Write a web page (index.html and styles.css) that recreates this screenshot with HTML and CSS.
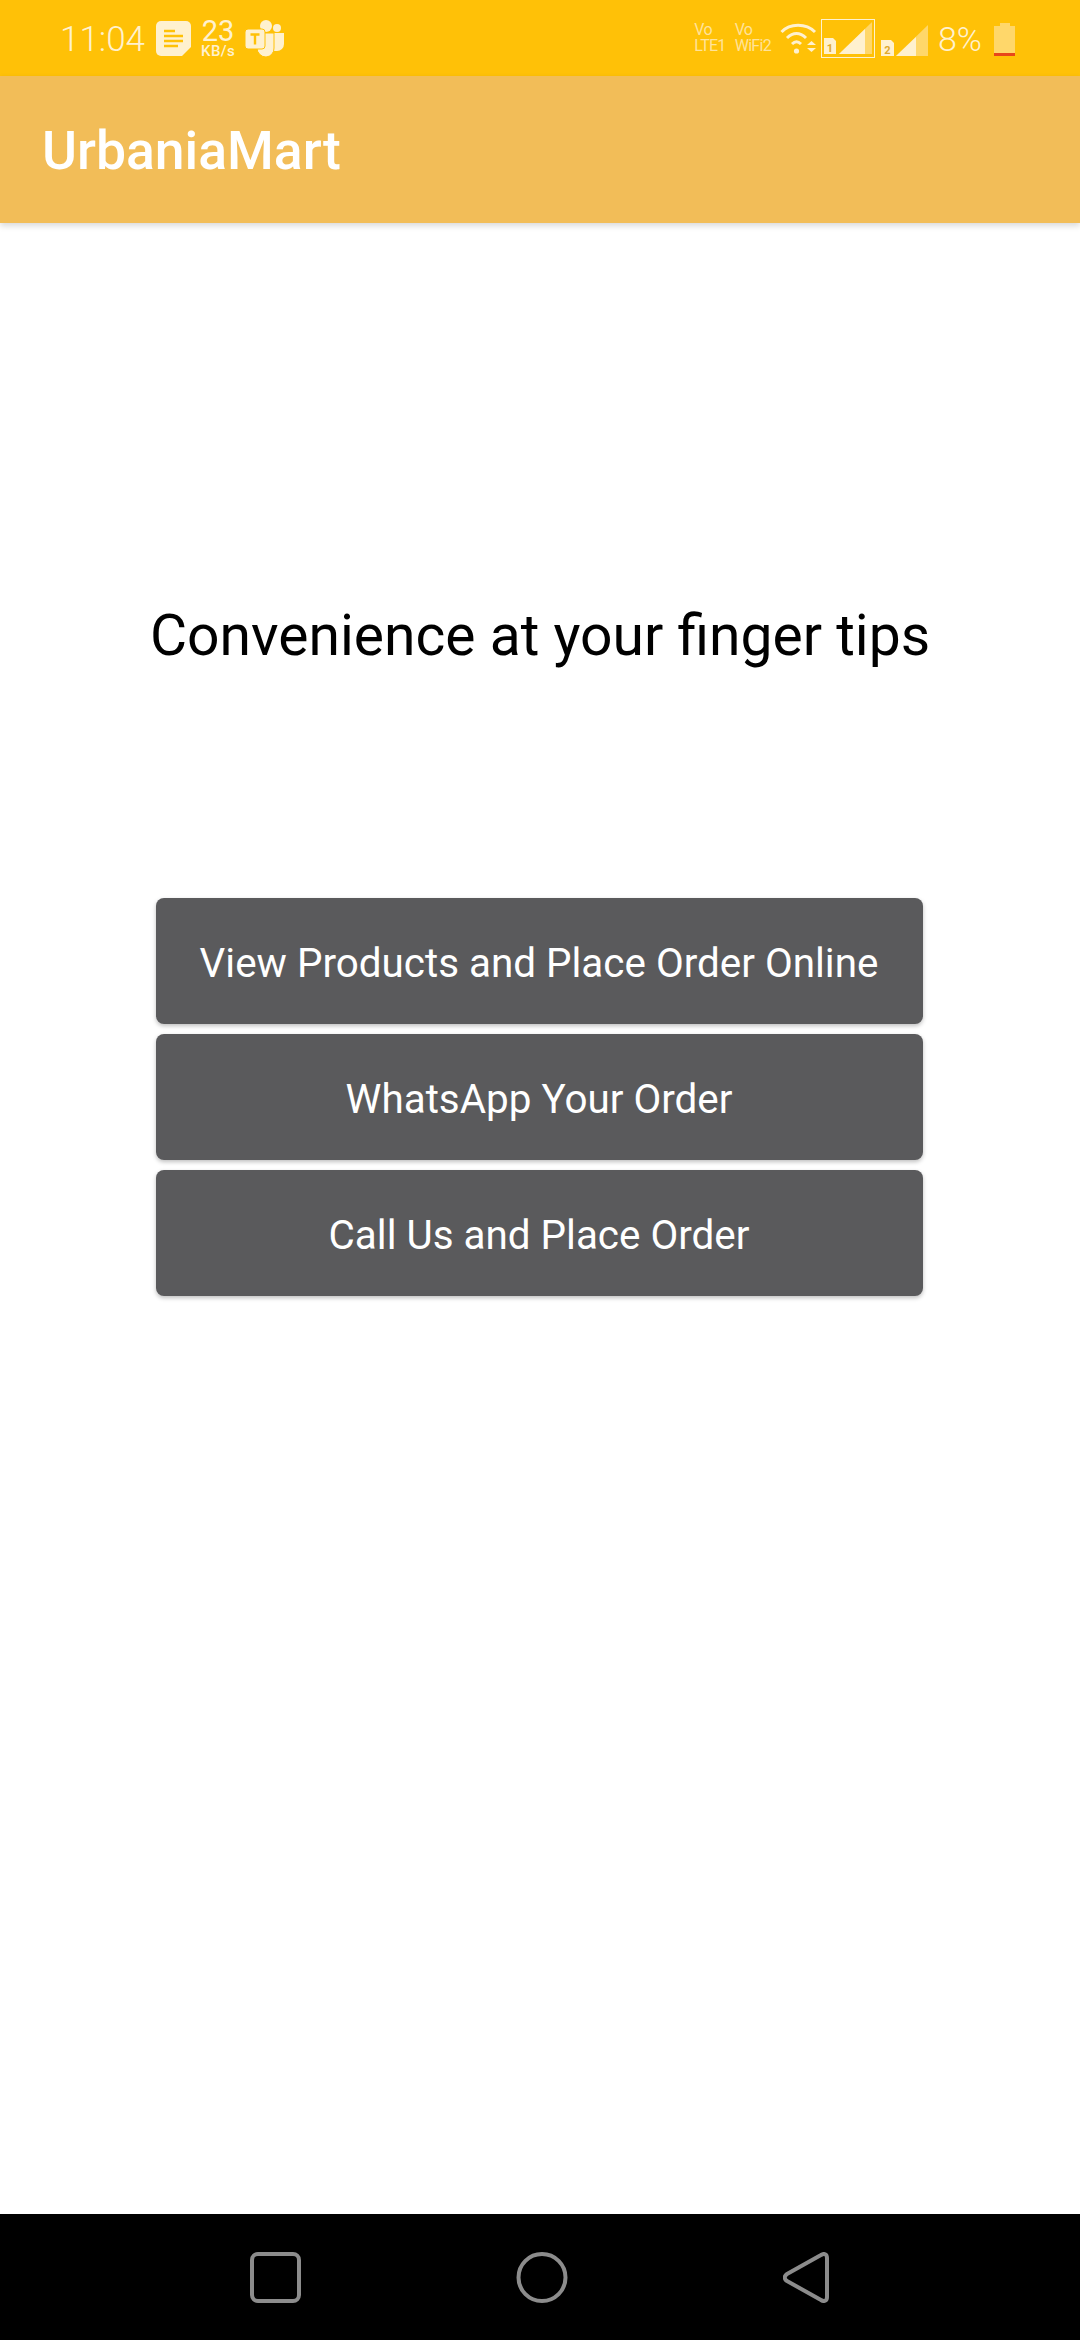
FILE: index.html
```html
<!DOCTYPE html>
<html lang="en">
<head>
  <meta charset="UTF-8">
  <meta name="viewport" content="width=device-width, initial-scale=1.0">
  <title>UrbaniaMart</title>
  <link rel="stylesheet" href="styles.css">
</head>
<body>

<div class="status-bar">
  <div class="status-left">
    <span class="clock">11:04</span>
    <svg class="icon-note" width="35" height="35" viewBox="0 0 35 35">
      <path d="M5 0H30A5 5 0 0 1 35 5V26L26 35H5A5 5 0 0 1 0 30V5A5 5 0 0 1 5 0Z" fill="#fff1cf"/>
      <path d="M8 10H19M8 15H27M8 20H27M8 25H22" stroke="#ffc107" stroke-width="2.400"/>
    </svg>
    <div class="speed">
      <span class="speed-num">23</span>
      <span class="speed-unit">KB/s</span>
    </div>
    <svg class="icon-teams" width="39" height="37" viewBox="0 0 39 37">
      <circle cx="21" cy="6" r="6" fill="#fff1cf"/>
      <circle cx="32" cy="8" r="4" fill="#fff1cf"/>
      <path d="M26 13H39V24A7 7 0 0 1 32 31H28Z" fill="#fff1cf"/>
      <path d="M13 13H29V28A8.500 8.500 0 0 1 21 37A9 9 0 0 1 12 28Z" fill="#fff1cf" stroke="#ffc107" stroke-width="1"/>
      <rect x="0" y="9" width="20" height="20" rx="3" fill="#fff1cf" stroke="#ffc107" stroke-width="1"/>
      <path d="M5.500 14.500H14.500M10 14.500V24.500" stroke="#ffc107" stroke-width="2.400"/>
    </svg>
  </div>
  <div class="status-right">
    <div class="net-tag"><span>Vo</span><span>LTE1</span></div>
    <div class="net-tag"><span>Vo</span><span>WiFi2</span></div>
    <svg class="icon-wifi" width="37" height="31" viewBox="0 0 37 31">
      <path d="M1.500 9C10 0 26 0 35 9M7 15C13 9 20 9 26 15M12 21C15 18 18 18 21 21" fill="none" stroke="#fff1cf" stroke-width="3"/>
      <circle cx="16.500" cy="28" r="2.600" fill="#fff1cf"/>
      <path d="M27 22L31.500 18L36 22ZM27 25H36L31.500 29Z" fill="#fff1cf"/>
    </svg>
    <div class="sim sim-active">
      <svg width="48" height="32" viewBox="0 0 48 32">
        <path d="M0 16H9L12 19V32H0Z" fill="#fff1cf"/>
        <text class="sim-num" x="6" y="30">1</text>
        <path d="M15 32L48 0V32Z" fill="#ffd76a"/>
        <path d="M15 32L41 7V32Z" fill="#fff1cf"/>
      </svg>
    </div>
    <div class="sim">
      <svg width="47" height="32" viewBox="0 0 47 32">
        <path d="M0 16H10L13 19V32H0Z" fill="#fff1cf"/>
        <text class="sim-num" x="6.500" y="30">2</text>
        <path d="M15 32L47 1V32Z" fill="#ffd76a"/>
        <path d="M15 32L35 13V32Z" fill="#fff1cf"/>
      </svg>
    </div>
    <span class="battery-pct">8%</span>
    <div class="battery">
      <div class="battery-cap"></div>
      <div class="battery-body"></div>
      <div class="battery-low"></div>
    </div>
  </div>
</div>

<div class="app-bar">UrbaniaMart</div>

<div class="content">
  <h1 class="tagline">Convenience at your finger tips</h1>
  <div class="actions">
    <a class="btn">View Products and Place Order Online</a>
    <a class="btn">WhatsApp Your Order</a>
    <a class="btn">Call Us and Place Order</a>
  </div>
</div>

<div class="nav-bar">
  <svg width="51" height="51" viewBox="0 0 51 51">
    <rect x="2" y="2" width="47" height="47" rx="6" fill="none" stroke="#8c8c8c" stroke-width="4"/>
  </svg>
  <svg width="52" height="51" viewBox="0 0 52 51">
    <circle cx="26" cy="25.500" r="23.500" fill="none" stroke="#8c8c8c" stroke-width="4"/>
  </svg>
  <svg width="46" height="51" viewBox="0 0 46 51">
    <path d="M44 6V45C44 49 41 50 38 48L4 29C1 27 1 24 4 22L38 3C41 1 44 2 44 6Z" fill="none" stroke="#8c8c8c" stroke-width="4" stroke-linejoin="round"/>
  </svg>
</div>

</body>
</html>
```

FILE: styles.css
```css
html, body {
  height: 100%;
}
body {
  margin: 0;
  display: flex;
  flex-direction: column;
  font-family: Roboto, sans-serif;
  background: #fff;
  overflow: hidden;
}

/* status bar */
.status-bar {
  height: 76px;
  flex: none;
  box-sizing: border-box;
  display: flex;
  justify-content: space-between;
  align-items: center;
  padding: 0 65px 0 60px;
  background: #ffc107;
  color: #fff1cf;
}
.status-left, .status-right {
  display: flex;
  align-items: center;
}
.clock {
  font-size: 35px;
  font-weight: 300;
  margin: 2px 11px 0 0;
}
.icon-note {
  margin-top: 1px;
}
.speed {
  display: flex;
  flex-direction: column;
  align-items: center;
  margin: 0 10px 0 10px;
  font-weight: 500;
}
.speed-num {
  font-size: 29px;
  line-height: 26px;
  font-weight: 400;
}
.speed-unit {
  font-size: 15px;
  line-height: 15px;
  letter-spacing: 0.4px;
}
.net-tag {
  display: flex;
  flex-direction: column;
  font-size: 16px;
  line-height: 16px;
  margin-right: 9px;
  letter-spacing: -0.7px;
  color: #ffe39a;
}
.icon-wifi {
  margin-right: 4px;
}
.sim {
  display: flex;
  margin-right: 10px;
  padding-top: 3px;
}
.sim-active {
  padding: 2px 2px 3px 2px;
  border: 1px solid #fff1cf;
  margin-right: 6px;
}
.sim-num {
  font-size: 11px;
  font-weight: 700;
  fill: #e0a92e;
  text-anchor: middle;
}
.battery-pct {
  font-size: 34px;
  font-weight: 300;
  margin: 2px 12px 0 0;
}
.battery {
  width: 21px;
  display: flex;
  flex-direction: column;
  align-items: center;
  margin-top: 2px;
}
.battery-cap {
  width: 10px;
  height: 3px;
  background: #ffd76a;
}
.battery-body {
  width: 21px;
  height: 27px;
  background: #ffd76a;
}
.battery-low {
  width: 21px;
  height: 3px;
  background: #e8461a;
}

/* app bar */
.app-bar {
  height: 147px;
  flex: none;
  box-sizing: border-box;
  padding: 2px 0 0 42px;
  display: flex;
  align-items: center;
  background: #f2bd58;
  color: #fff;
  font-size: 53.500px;
  font-weight: 500;
  box-shadow: 0 3px 6px rgba(0,0,0,0.15);
  position: relative;
}

/* main */
.content {
  flex: 1;
  display: flex;
  flex-direction: column;
  align-items: center;
}
.tagline {
  margin: 377px 0 0 0;
  height: 72px;
  line-height: 72px;
  font-size: 57px;
  font-weight: 400;
  color: #000;
}
.actions {
  margin-top: 226px;
  display: flex;
  flex-direction: column;
  gap: 10px;
  width: 767px;
  margin-right: 2px;
}
.btn {
  height: 126px;
  box-sizing: border-box;
  padding-top: 4px;
  display: flex;
  align-items: center;
  justify-content: center;
  background: #5a5a5c;
  color: #fff;
  font-size: 40.400px;
  border-radius: 8px;
  box-shadow: 0 2px 4px rgba(0,0,0,0.25);
}

/* nav bar */
.nav-bar {
  height: 126px;
  flex: none;
  display: flex;
  align-items: center;
  justify-content: space-between;
  padding: 0 251px 0 250px;
  box-sizing: border-box;
  background: #000;
}
```
